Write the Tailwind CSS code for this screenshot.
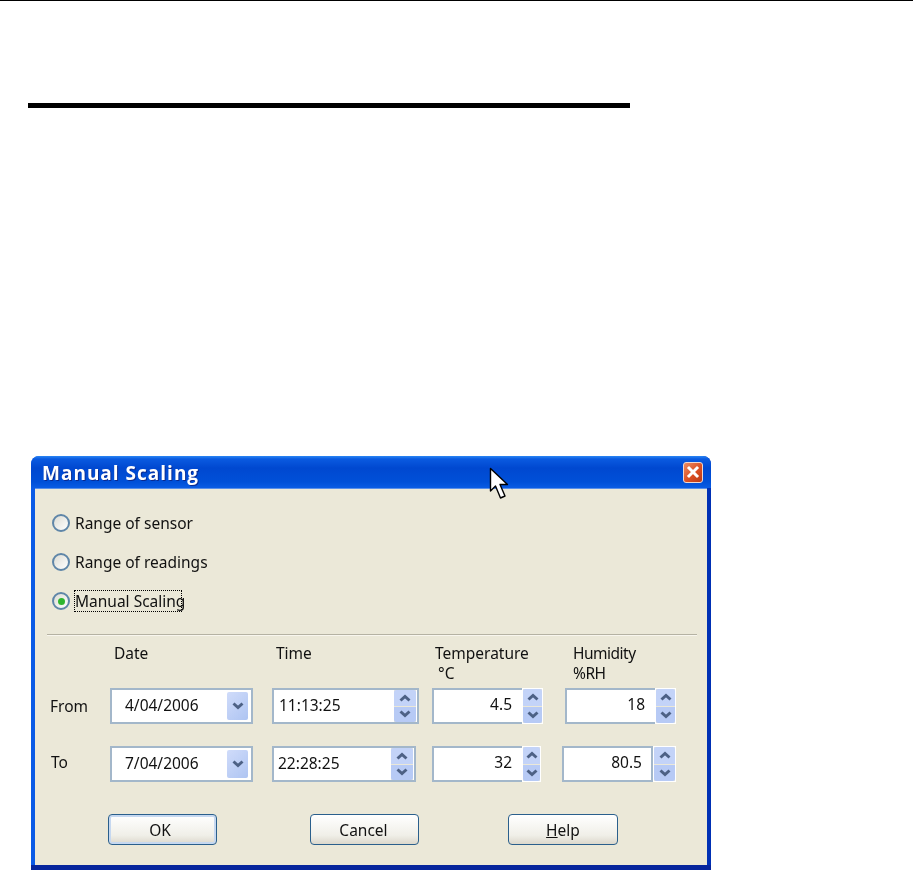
<!DOCTYPE html>
<html lang="en">
  <head>
    <meta charset="UTF-8" />
    <title>Manual Scaling</title>
    <script src="https://cdn.jsdelivr.net/npm/@tailwindcss/browser@4"></script>
  </head>
  <body class="relative h-[870px] w-[913px] overflow-hidden bg-white font-['Noto_Sans',sans-serif] text-[15.5px] leading-[20px] text-[#111]">
    <div class="h-px bg-black"></div>
    <div class="mt-[102px] ml-[28px] h-[5px] w-[602px] bg-black"></div>

    <div class="mt-[348px] ml-[31px] flex h-[414px] w-[680px] flex-col rounded-t-[8px] border-b-[5px] border-[#06259c] bg-[linear-gradient(90deg,#0a5ae6,#0350d8_50%,#0030b4)] px-[4px] blur-[0.45px]">
      <div class="-mx-[4px] flex h-[32px] shrink-0 items-center justify-between rounded-t-[8px] bg-[linear-gradient(180deg,#2a86f4_0,#0a5ae0_3px,#0048d0_12px,#0050d8_26px,#0a5ce4_100%)] pr-[8px] pl-[11px]">
        <span class="pt-[2px] font-['Open_Sans',sans-serif] text-[19px] font-bold tracking-[1px] text-white [text-shadow:1px_1px_0_#0a2a90]">Manual Scaling</span>
        <span class="flex h-[21px] w-[20px] items-center justify-center rounded-[3px] border border-[#f0d8d0] bg-[linear-gradient(135deg,#ec8c64,#dc4f22_55%,#b83a18)]">
          <svg width="14" height="14" viewBox="0 0 14 14"><path d="M3 3l8 8M11 3l-8 8" stroke="#fff" stroke-width="3" stroke-linecap="square"/></svg>
        </span>
      </div>

      <div class="flex-1 border-t border-[#5a90e8] bg-[#ebe8d8]">
        <div class="mt-[23px] flex h-[22px] items-center pl-[17px]">
          <span class="h-[18px] w-[18px] rounded-full border-2 border-[#5f86a8] bg-[linear-gradient(135deg,#dcdcd4,#ffffff)]"></span>
          <span class="ml-[5px]">Range of sensor</span>
        </div>
        <div class="mt-[17px] flex h-[22px] items-center pl-[17px]">
          <span class="h-[18px] w-[18px] rounded-full border-2 border-[#5f86a8] bg-[linear-gradient(135deg,#dcdcd4,#ffffff)]"></span>
          <span class="ml-[5px]">Range of readings</span>
        </div>
        <div class="mt-[17px] flex h-[22px] items-center pl-[17px]">
          <span class="flex h-[18px] w-[18px] items-center justify-center rounded-full border-2 border-[#5f86a8] bg-[linear-gradient(135deg,#dcdcd4,#ffffff)]">
            <span class="h-[7px] w-[7px] rounded-full bg-[#2fb52f]"></span>
          </span>
          <span class="ml-[4px] flex h-[22px] w-[108px] items-center border border-dotted border-black whitespace-nowrap">Manual Scaling</span>
        </div>

        <div class="mt-[22px] ml-[12px] h-[2px] w-[650px] border-t border-[#b5b2a3] bg-[#f8f6ee]"></div>

        <div class="mt-[7px] flex h-[45px]">
          <div class="ml-[79px] w-[162px]">Date</div>
          <div class="w-[159px]">Time</div>
          <div class="w-[138px]">Temperature<br /><span class="ml-[3px]">°C</span></div>
          <div class="tracking-[-0.5px]">Humidity<br />%RH</div>
        </div>

        <!-- From row -->
        <div class="flex h-[36px] items-center">
          <div class="ml-[15px] w-[60px]">From</div>
          <div class="relative flex h-[36px] w-[143px] items-center border-2 border-[#a3b7ca] bg-white pb-[3px] pl-[13px]">
            4/04/2006
            <span class="absolute top-[2px] right-[3px] flex h-[28px] w-[21px] items-center justify-center rounded-[2px] bg-[linear-gradient(135deg,#d0dcfa,#aec4f2)]">
              <svg width="12" height="8" viewBox="0 0 12 8"><path d="M1.5 1.5l4.5 4 4.5-4" fill="none" stroke="#4d6185" stroke-width="3"/></svg>
            </span>
          </div>
          <div class="relative ml-[19px] flex h-[36px] w-[147px] items-center border-2 border-[#a3b7ca] bg-white pb-[3px] pl-[5px]">
            11:13:25
            <span class="absolute top-0 right-[1px] flex h-[32px] w-[22px] flex-col gap-px bg-[#ebe8d8]">
              <span class="flex flex-1 items-center justify-center rounded-t-[2px] bg-[#c3d3f8]"><svg width="12" height="8" viewBox="0 0 12 8"><path d="M1.5 6.5l4.5-4 4.5 4" fill="none" stroke="#4d6185" stroke-width="3"/></svg></span>
              <span class="flex flex-1 items-center justify-center rounded-b-[2px] bg-[#b7caf5]"><svg width="12" height="8" viewBox="0 0 12 8"><path d="M1.5 1.5l4.5 4 4.5-4" fill="none" stroke="#4d6185" stroke-width="3"/></svg></span>
            </span>
          </div>
          <div class="ml-[13px] flex h-[36px] w-[90px] items-center justify-end border-2 border-r-0 border-[#a3b7ca] bg-white pr-[10px] pb-[5px]">4.5</div>
          <span class="flex h-[36px] w-[21px] flex-col gap-px border border-white bg-[#ebe8d8]">
            <span class="flex flex-1 items-center justify-center rounded-t-[2px] bg-[#c3d3f8]"><svg width="12" height="8" viewBox="0 0 12 8"><path d="M1.5 6.5l4.5-4 4.5 4" fill="none" stroke="#4d6185" stroke-width="3"/></svg></span>
            <span class="flex flex-1 items-center justify-center rounded-b-[2px] bg-[#b7caf5]"><svg width="12" height="8" viewBox="0 0 12 8"><path d="M1.5 1.5l4.5 4 4.5-4" fill="none" stroke="#4d6185" stroke-width="3"/></svg></span>
          </span>
          <div class="ml-[22px] flex h-[36px] w-[90px] items-center justify-end border-2 border-r-0 border-[#a3b7ca] bg-white pr-[10px] pb-[5px]">18</div>
          <span class="flex h-[36px] w-[21px] flex-col gap-px border border-white bg-[#ebe8d8]">
            <span class="flex flex-1 items-center justify-center rounded-t-[2px] bg-[#c3d3f8]"><svg width="12" height="8" viewBox="0 0 12 8"><path d="M1.5 6.5l4.5-4 4.5 4" fill="none" stroke="#4d6185" stroke-width="3"/></svg></span>
            <span class="flex flex-1 items-center justify-center rounded-b-[2px] bg-[#b7caf5]"><svg width="12" height="8" viewBox="0 0 12 8"><path d="M1.5 1.5l4.5 4 4.5-4" fill="none" stroke="#4d6185" stroke-width="3"/></svg></span>
          </span>
        </div>

        <!-- To row -->
        <div class="mt-[22px] flex h-[36px] items-center">
          <div class="ml-[16px] w-[59px] pb-[4px]">To</div>
          <div class="relative flex h-[36px] w-[143px] items-center border-2 border-[#a3b7ca] bg-white pb-[2px] pl-[13px]">
            7/04/2006
            <span class="absolute top-[2px] right-[3px] flex h-[28px] w-[21px] items-center justify-center rounded-[2px] bg-[linear-gradient(135deg,#d0dcfa,#aec4f2)]">
              <svg width="12" height="8" viewBox="0 0 12 8"><path d="M1.5 1.5l4.5 4 4.5-4" fill="none" stroke="#4d6185" stroke-width="3"/></svg>
            </span>
          </div>
          <div class="relative ml-[19px] flex h-[36px] w-[144px] items-center border-2 border-[#a3b7ca] bg-white pb-[2px] pl-[4px]">
            22:28:25
            <span class="absolute top-0 right-[1px] flex h-[32px] w-[22px] flex-col gap-px bg-[#ebe8d8]">
              <span class="flex flex-1 items-center justify-center rounded-t-[2px] bg-[#c3d3f8]"><svg width="12" height="8" viewBox="0 0 12 8"><path d="M1.5 6.5l4.5-4 4.5 4" fill="none" stroke="#4d6185" stroke-width="3"/></svg></span>
              <span class="flex flex-1 items-center justify-center rounded-b-[2px] bg-[#b7caf5]"><svg width="12" height="8" viewBox="0 0 12 8"><path d="M1.5 1.5l4.5 4 4.5-4" fill="none" stroke="#4d6185" stroke-width="3"/></svg></span>
            </span>
          </div>
          <div class="ml-[16px] flex h-[36px] w-[90px] items-center justify-end border-2 border-r-0 border-[#a3b7ca] bg-white pr-[10px] pb-[5px]">32</div>
          <span class="flex h-[36px] w-[19px] flex-col gap-px border border-white bg-[#ebe8d8]">
            <span class="flex flex-1 items-center justify-center rounded-t-[2px] bg-[#c3d3f8]"><svg width="12" height="8" viewBox="0 0 12 8"><path d="M1.5 6.5l4.5-4 4.5 4" fill="none" stroke="#4d6185" stroke-width="3"/></svg></span>
            <span class="flex flex-1 items-center justify-center rounded-b-[2px] bg-[#b7caf5]"><svg width="12" height="8" viewBox="0 0 12 8"><path d="M1.5 1.5l4.5 4 4.5-4" fill="none" stroke="#4d6185" stroke-width="3"/></svg></span>
          </span>
          <div class="ml-[21px] flex h-[36px] w-[91px] items-center justify-end border-2 border-[#a3b7ca] bg-white pr-[9px] pb-[5px]">80.5</div>
          <span class="flex h-[36px] w-[23px] flex-col gap-px border border-white bg-[#ebe8d8]">
            <span class="flex flex-1 items-center justify-center rounded-t-[2px] bg-[#c3d3f8]"><svg width="12" height="8" viewBox="0 0 12 8"><path d="M1.5 6.5l4.5-4 4.5 4" fill="none" stroke="#4d6185" stroke-width="3"/></svg></span>
            <span class="flex flex-1 items-center justify-center rounded-b-[2px] bg-[#b7caf5]"><svg width="12" height="8" viewBox="0 0 12 8"><path d="M1.5 1.5l4.5 4 4.5-4" fill="none" stroke="#4d6185" stroke-width="3"/></svg></span>
          </span>
        </div>

        <div class="mt-[32px] ml-[73px] flex">
          <button class="h-[31px] w-[109px] rounded-[4px] border border-[#2a5f8c] bg-[linear-gradient(180deg,#ffffff,#f0efe8_70%,#dcd8cc)] pr-[5px] shadow-[inset_0_0_0_2px_#c6d8f0]">OK</button>
          <button class="ml-[93px] h-[31px] w-[109px] rounded-[4px] border border-[#2a5f8c] bg-[linear-gradient(180deg,#ffffff,#f0efe8_70%,#dcd8cc)] pr-[2px]">Cancel</button>
          <button class="ml-[89px] h-[31px] w-[110px] rounded-[4px] border border-[#2a5f8c] bg-[linear-gradient(180deg,#ffffff,#f0efe8_70%,#dcd8cc)]"><span class="underline">H</span>elp</button>
        </div>
      </div>
    </div>

    <!-- mouse pointer over the title bar -->
    <svg class="absolute top-[467px] left-[489px]" width="20" height="34" viewBox="0 0 20 34">
      <path d="M1.5 1.5V24l5-5 5 12 4.5-2-5-11.5h7.5z" fill="#fff" stroke="#000" stroke-width="1.4" stroke-linejoin="round"/>
    </svg>
  </body>
</html>
